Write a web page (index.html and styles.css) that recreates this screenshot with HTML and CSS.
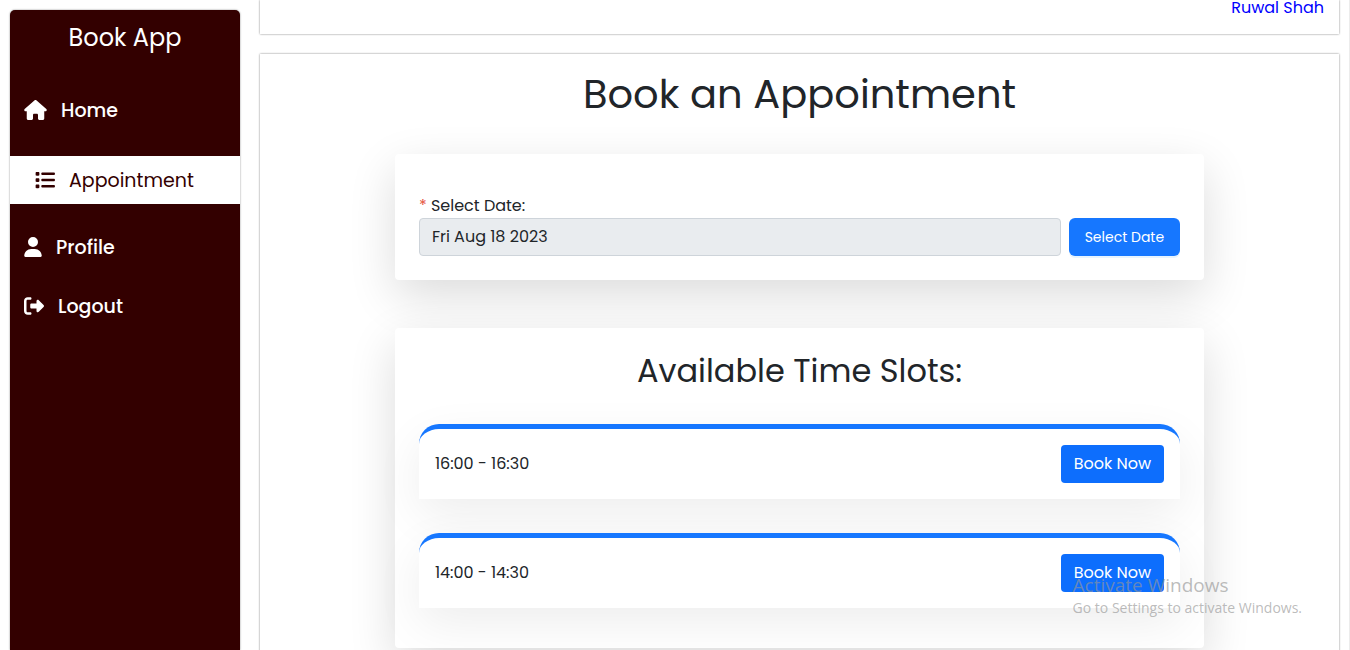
FILE: index.html
```html
<!DOCTYPE html>
<html lang="en">
<head>
<meta charset="utf-8">
<meta name="viewport" content="width=device-width, initial-scale=1">
<title>Book App</title>
<link rel="stylesheet" href="styles.css">
</head>
<body>
<div class="layout">
  <aside class="sidebar">
    <div class="brand">Book App</div>
    <nav class="menu">
      <a class="menu-item" href="#home">
        <svg class="icon-wide" viewBox="0 0 576 512" aria-hidden="true"><path d="M575.8 255.5c0 18-15 32.1-32 32.1h-32l.7 160.2c0 2.7-.2 5.4-.5 8.1V472c0 22.1-17.9 40-40 40H456c-1.1 0-2.2 0-3.3-.1c-1.4 .1-2.8 .1-4.2 .1H416 392c-22.1 0-40-17.9-40-40V448 384c0-17.7-14.3-32-32-32H256c-17.7 0-32 14.3-32 32v64 24c0 22.1-17.9 40-40 40H160 128.1c-1.5 0-3-.1-4.5-.2c-1.2 .1-2.4 .2-3.6 .2H104c-22.1 0-40-17.9-40-40V360c0-.9 0-1.9 .1-2.8V287.6H32c-18 0-32-14-32-32.1c0-9 3-17 10-24L266.4 8c7-7 15-8 22-8s15 2 21 7L564.8 231.5c8 7 12 15 11 24z"/></svg>
        <span>Home</span>
      </a>
      <a class="menu-item active" href="#appointment" aria-current="page">
        <svg class="icon" viewBox="0 0 512 512" aria-hidden="true"><path d="M40 48C26.700 48 16 58.700 16 72v48c0 13.300 10.700 24 24 24H88c13.300 0 24-10.700 24-24V72c0-13.300-10.700-24-24-24H40zM192 64c-17.700 0-32 14.300-32 32s14.300 32 32 32H480c17.700 0 32-14.300 32-32s-14.300-32-32-32H192zm0 160c-17.700 0-32 14.300-32 32s14.300 32 32 32H480c17.700 0 32-14.300 32-32s-14.300-32-32-32H192zm0 160c-17.700 0-32 14.300-32 32s14.300 32 32 32H480c17.700 0 32-14.300 32-32s-14.300-32-32-32H192zM16 232v48c0 13.300 10.700 24 24 24H88c13.300 0 24-10.700 24-24V232c0-13.300-10.700-24-24-24H40c-13.300 0-24 10.700-24 24zM40 368c-13.300 0-24 10.700-24 24v48c0 13.300 10.700 24 24 24H88c13.300 0 24-10.700 24-24V392c0-13.300-10.700-24-24-24H40z"/></svg>
        <span>Appointment</span>
      </a>
      <a class="menu-item" href="#profile">
        <svg class="icon-narrow" viewBox="0 0 448 512" aria-hidden="true"><path d="M224 256A128 128 0 1 0 224 0a128 128 0 1 0 0 256zm-45.700 48C79.800 304 0 383.800 0 482.300C0 498.700 13.300 512 29.700 512H418.300c16.400 0 29.700-13.300 29.700-29.700C448 383.800 368.200 304 269.700 304H178.300z"/></svg>
        <span>Profile</span>
      </a>
      <a class="menu-item" href="#logout">
        <svg class="icon" viewBox="0 0 512 512" aria-hidden="true"><path d="M377.900 105.900L500.700 228.700c7.200 7.200 11.300 17.100 11.300 27.300s-4.100 20.100-11.300 27.300L377.900 406.100c-6.400 6.400-15 9.900-24 9.900c-18.700 0-33.900-15.200-33.900-33.900l0-62.100-128 0c-17.700 0-32-14.300-32-32l0-64c0-17.700 14.300-32 32-32l128 0 0-62.100c0-18.700 15.200-33.900 33.900-33.900c9 0 17.600 3.600 24 9.900zM160 96L96 96c-17.700 0-32 14.300-32 32l0 256c0 17.700 14.300 32 32 32l64 0c17.700 0 32 14.300 32 32s-14.300 32-32 32l-64 0c-53 0-96-43-96-96L0 128C0 75 43 32 96 32l64 0c17.700 0 32 14.300 32 32s-14.300 32-32 32z"/></svg>
        <span>Logout</span>
      </a>
    </nav>
  </aside>
  <div class="content">
    <header class="topbar"><a class="user-link" href="#profile">Ruwal Shah</a></header>
    <main class="panel">
      <h1 class="page-title">Book an Appointment</h1>
      <section class="card date-card">
        <label class="field-label" for="date"><span class="required">*</span> Select Date:</label>
        <div class="field-row">
          <input class="date-input" id="date" type="text" value="Fri Aug 18 2023" readonly>
          <button class="select-button" type="button">Select Date</button>
        </div>
      </section>
      <section class="card slots-card">
        <h2 class="slots-title">Available Time Slots:</h2>
        <div class="slot">
          <span>16:00 - 16:30</span>
          <button class="book-button" type="button">Book Now</button>
        </div>
        <div class="slot">
          <span>14:00 - 14:30</span>
          <button class="book-button" type="button">Book Now</button>
        </div>
      </section>
    </main>
  </div>
</div>
<div class="watermark">
  <div class="watermark-title">Activate Windows</div>
  <div class="watermark-text">Go to Settings to activate Windows.</div>
</div>
</body>
</html>
```
FILE: styles.css
```css
* {
  box-sizing: border-box;
}

body {
  margin: 0;
  font-family: Poppins, Inter, "Liberation Sans", sans-serif;
  font-size: 16px;
  line-height: 24px;
  color: #212529;
  background: #fff;
}

button,
input {
  font-family: inherit;
}

.layout {
  display: flex;
  gap: 20px;
  height: 100vh;
  padding: 0 10px;
  overflow: hidden;
  border-right: 1px solid #ececec;
}

.sidebar {
  flex: 0 0 230px;
  margin-top: 10px;
  border-radius: 5px 5px 0 0;
  background: #300;
  color: #fff;
  box-shadow: 0 0 2px gray;
}

.brand {
  padding-top: 12px;
  font-size: 24px;
  line-height: 32px;
  text-align: center;
}

.menu {
  display: flex;
  flex-direction: column;
  gap: 11px;
  margin-top: 32px;
}

.menu-item {
  display: flex;
  align-items: center;
  gap: 14px;
  height: 48px;
  padding-left: 14px;
  font-size: 19px;
  font-weight: 500;
  line-height: 26px;
  color: #fff;
  text-decoration: none;
}

.menu-item span {
  padding-top: 1px;
}

.menu-item.active {
  margin: 11px 0 8px;
  padding-left: 25px;
  background: #fff;
  color: #300;
  font-weight: 400;
}

.icon,
.icon-wide,
.icon-narrow {
  flex: none;
  width: 20px;
  height: 20px;
  fill: currentColor;
}

.icon-wide {
  width: 23px;
}

.icon-narrow {
  width: 18px;
}

.content {
  display: flex;
  flex: 1;
  flex-direction: column;
  gap: 20px;
  min-width: 0;
}

.topbar {
  display: flex;
  justify-content: flex-end;
  padding: 0 15px 18px;
  line-height: 16px;
  box-shadow: 0 0 2px gray;
}

.user-link {
  color: #00f;
  text-decoration: none;
}

.panel {
  flex: 1 0 auto;
  padding-top: 16px;
  box-shadow: 0 0 2px gray;
}

.page-title {
  margin: 0 0 36px;
  font-size: 40px;
  font-weight: 400;
  line-height: 48px;
  text-align: center;
}

.card {
  width: 75%;
  margin: 0 auto 48px;
  padding: 24px;
  border-radius: 4px;
  background: #fff;
  box-shadow: 0 16px 48px rgba(0, 0, 0, .14);
}

.date-card {
  padding-top: 40px;
}

.field-label {
  display: block;
}

.required {
  color: #e5533d;
}

.field-row {
  display: flex;
  gap: 8px;
}

.date-input {
  flex: 1;
  min-width: 0;
  height: 38px;
  padding: 0 12px 2px;
  border: 1px solid #ced4da;
  border-radius: 4px;
  background: #e9ecef;
  color: #212529;
  font-size: 16px;
}

.select-button {
  padding: 0 16px;
  border: 0;
  border-radius: 6px;
  background: #1677ff;
  box-shadow: 0 2px 0 rgba(5, 145, 255, .1);
  color: #fff;
  font-size: 14px;
}

.slots-card {
  padding-bottom: 40px;
}

.slots-title {
  margin: 0 0 34px;
  font-size: 32px;
  font-weight: 400;
  line-height: 38px;
  text-align: center;
}

.slot {
  display: flex;
  align-items: center;
  justify-content: space-between;
  padding: 16px;
  border-top: 5px solid #1677ff;
  border-radius: 20px 20px 0 0;
  background: #fff;
  box-shadow: 0 16px 48px rgba(0, 0, 0, .07);
}

.slot + .slot {
  margin-top: 34px;
}

.book-button {
  height: 38px;
  padding: 0 13px 2px;
  border: 0;
  border-radius: 4px;
  background: #0d6efd;
  color: #fff;
  font-size: 16px;
}

.watermark {
  position: absolute;
  right: 48px;
  bottom: 32px;
  font-family: "Segoe UI", "Open Sans", sans-serif;
  color: rgba(150, 150, 150, .65);
  pointer-events: none;
}

.watermark-title {
  font-size: 19px;
  line-height: 26px;
}

.watermark-text {
  font-size: 14px;
  line-height: 20px;
}
```
